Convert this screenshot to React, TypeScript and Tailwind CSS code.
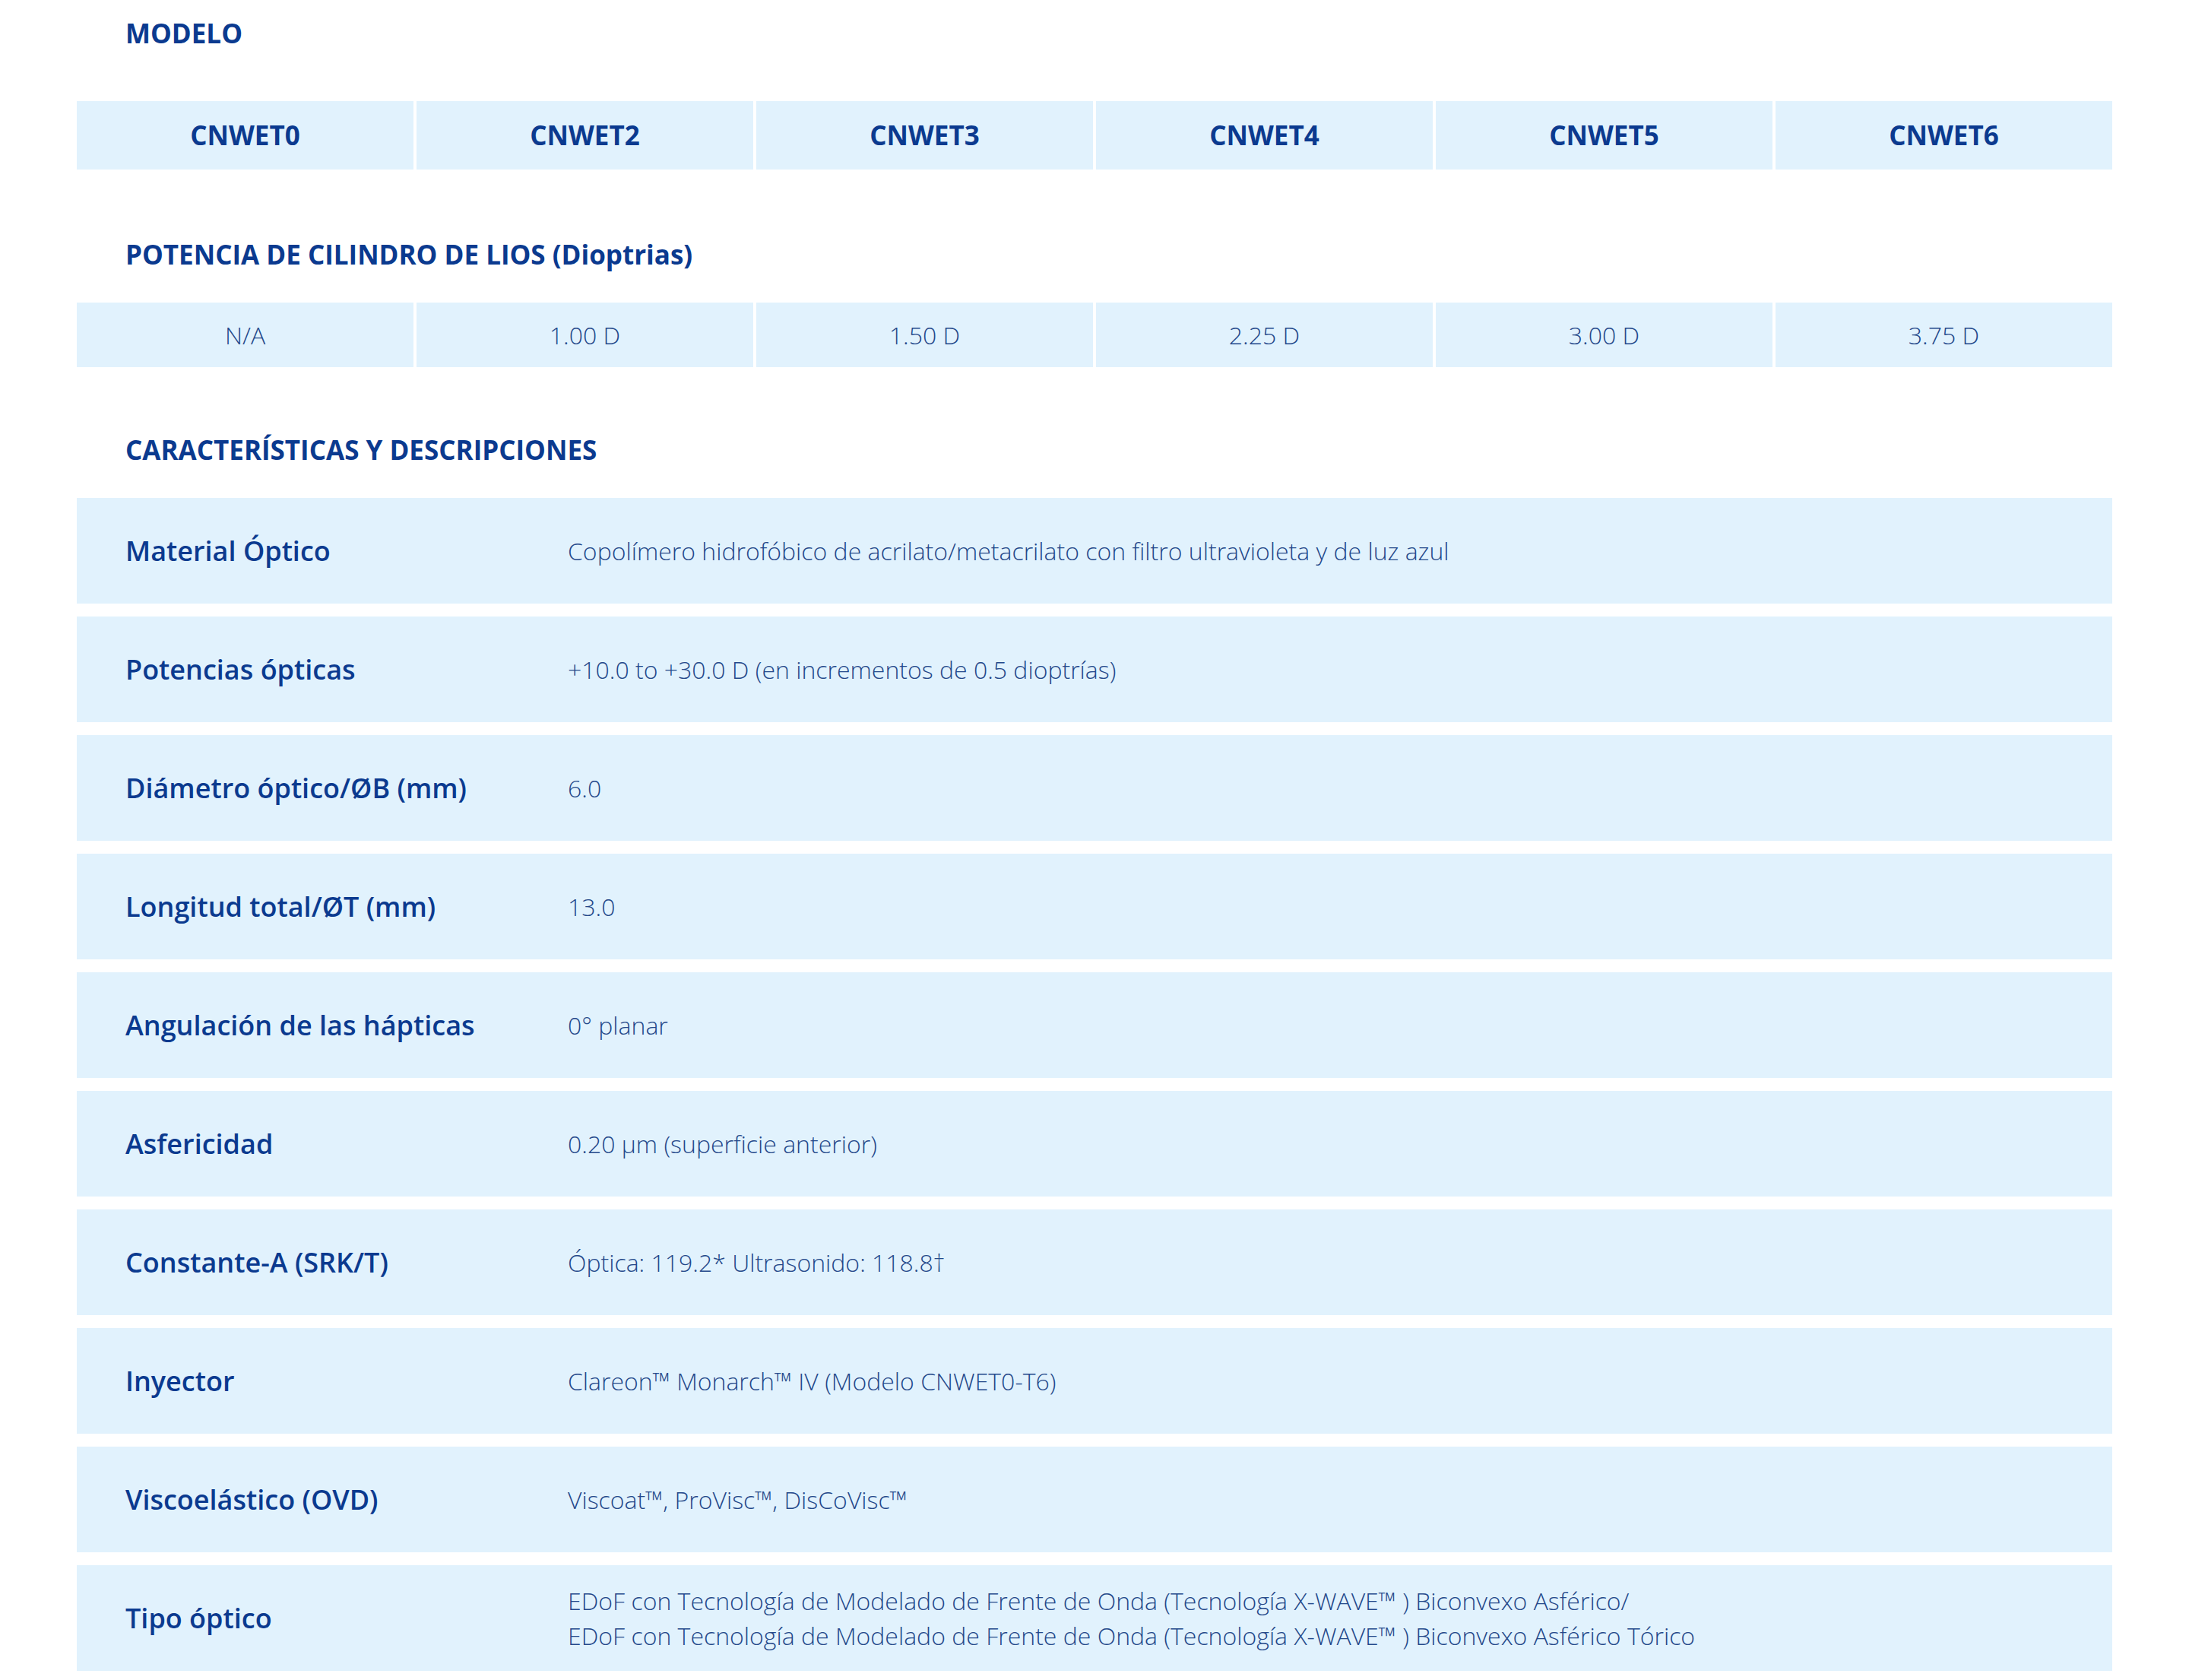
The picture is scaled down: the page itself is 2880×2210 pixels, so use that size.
const MODELS = ['CNWET0', 'CNWET2', 'CNWET3', 'CNWET4', 'CNWET5', 'CNWET6'];
const POWERS = ['N/A', '1.00 D', '1.50 D', '2.25 D', '3.00 D', '3.75 D'];

const ROWS: { label: string; value: string[] }[] = [
  { label: 'Material Óptico', value: ['Copolímero hidrofóbico de acrilato/metacrilato con filtro ultravioleta y de luz azul'] },
  { label: 'Potencias ópticas', value: ['+10.0 to +30.0 D (en incrementos de 0.5 dioptrías)'] },
  { label: 'Diámetro óptico/ØB (mm)', value: ['6.0'] },
  { label: 'Longitud total/ØT (mm)', value: ['13.0'] },
  { label: 'Angulación de las hápticas', value: ['0° planar'] },
  { label: 'Asfericidad', value: ['0.20 µm (superficie anterior)'] },
  { label: 'Constante-A (SRK/T)', value: ['Óptica: 119.2* Ultrasonido: 118.8†'] },
  { label: 'Inyector', value: ['Clareon™ Monarch™ IV (Modelo CNWET0-T6)'] },
  { label: 'Viscoelástico (OVD)', value: ['Viscoat™, ProVisc™, DisCoVisc™'] },
  {
    label: 'Tipo óptico',
    value: [
      'EDoF con Tecnología de Modelado de Frente de Onda (Tecnología X-WAVE™ ) Biconvexo Asférico/',
      'EDoF con Tecnología de Modelado de Frente de Onda (Tecnología X-WAVE™ ) Biconvexo Asférico Tórico',
    ],
  },
];

export default function App() {
  return (
    <div className="bg-white px-[101px] pt-[22px] text-[#0b3a8f]" style={{ fontFamily: '"Open Sans", "Noto Sans", sans-serif' }}>
      {/* Modelo */}
      <h2 className="pl-[64px] text-[35px] leading-[44px] font-bold">MODELO</h2>
      <div className="mt-[67px] grid grid-cols-6 gap-[4px]">
        {MODELS.map(m => (
          <div key={m} className="h-[90px] bg-[#e1f2fd] flex items-center justify-center text-[35px] font-bold">
            {m}
          </div>
        ))}
      </div>

      {/* Potencia */}
      <h2 className="mt-[90px] pl-[64px] text-[35px] leading-[44px] font-bold">POTENCIA DE CILINDRO DE LIOS (Dioptrias)</h2>
      <div className="mt-[41px] grid grid-cols-6 gap-[4px]">
        {POWERS.map(p => (
          <div key={p} className="h-[85px] bg-[#e1f2fd] flex items-center justify-center text-[32px] font-light text-[#24488a]">
            {p}
          </div>
        ))}
      </div>

      {/* Características */}
      <h2 className="mt-[87px] pl-[64px] text-[35px] leading-[44px] font-bold">CARACTERÍSTICAS Y DESCRIPCIONES</h2>
      <div className="mt-[41px] flex flex-col gap-[17px]">
        {ROWS.map(r => (
          <div key={r.label} className="h-[139px] bg-[#e1f2fd] flex items-center pl-[64px]">
            <div className="w-[582px] shrink-0 text-[36px] font-semibold">{r.label}</div>
            <div className="text-[32px] font-light leading-[46px] text-[#24488a]">
              {r.value.map(v => (
                <div key={v}>{v}</div>
              ))}
            </div>
          </div>
        ))}
      </div>
    </div>
  );
}
